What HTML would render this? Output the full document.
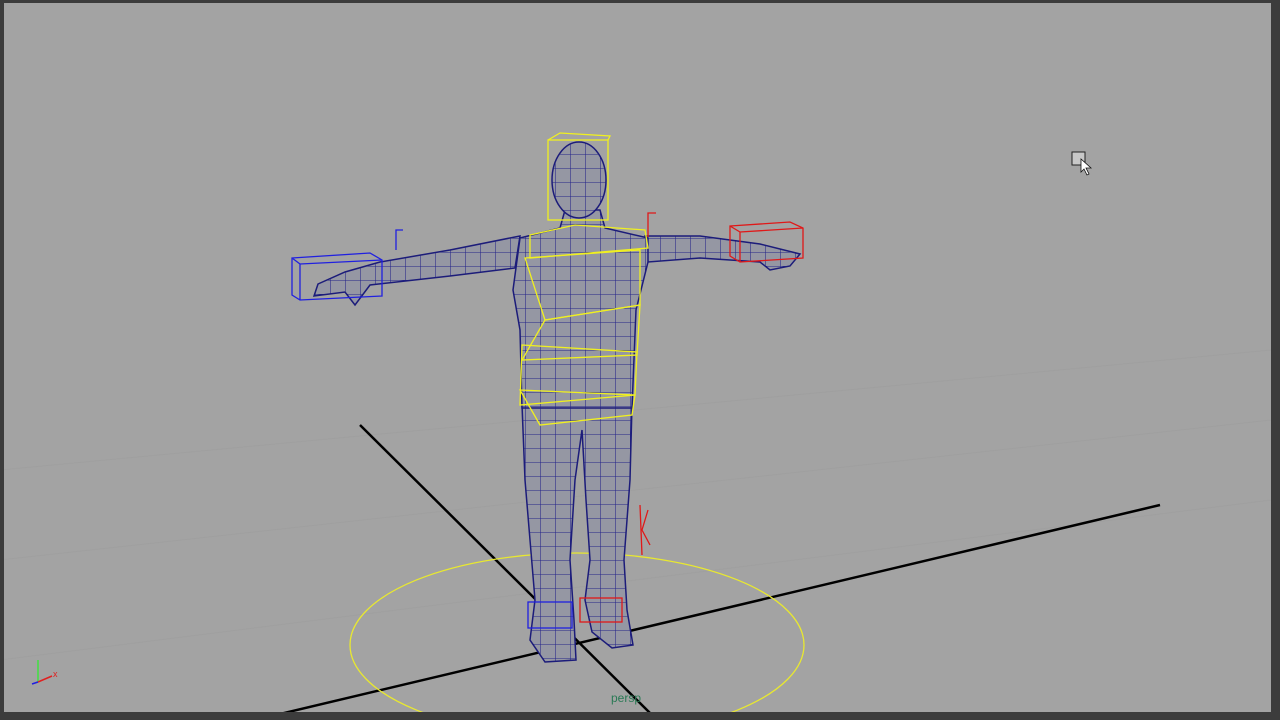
<!DOCTYPE html>
<html><head><meta charset="utf-8"><style>
html,body{margin:0;padding:0;background:#3a3a3a;width:1280px;height:720px;overflow:hidden}
svg{display:block}
</style></head><body>
<svg width="1280" height="720" viewBox="0 0 1280 720" xmlns="http://www.w3.org/2000/svg">
<defs>
<pattern id="mesh" width="15" height="14" patternUnits="userSpaceOnUse">
<rect width="15" height="14" fill="#9597a3"/>
<path d="M0 0H15M0 0V14" stroke="#25258a" stroke-width="1.1" fill="none"/>
</pattern>
<clipPath id="vp"><rect x="4" y="3" width="1267" height="709"/></clipPath>
</defs>
<rect width="1280" height="720" fill="#3c3c3c"/>
<rect x="4" y="3" width="1267" height="709" fill="#a3a3a3"/>
<g clip-path="url(#vp)">
<g stroke="#9c9c9c" stroke-width="1" opacity="0.5">
<line x1="0" y1="470" x2="1271" y2="350"/><line x1="0" y1="560" x2="1271" y2="420"/>
<line x1="0" y1="660" x2="1271" y2="500"/>
</g>
<line x1="360" y1="425" x2="652" y2="715" stroke="#000" stroke-width="2.5"/>
<line x1="280" y1="714" x2="1160" y2="505" stroke="#000" stroke-width="2.5"/>
<ellipse cx="577" cy="645" rx="227" ry="92" fill="none" stroke="#e8e830" stroke-width="1.3"/>
<g fill="url(#mesh)" stroke="#1c1c7a" stroke-width="1.5">
<path d="M520 236 L450 250 L380 262 L345 272 L318 284 L314 296 L345 292 L355 305 L370 285 L450 276 L515 268Z"/>
<path d="M645 236 L700 236 L760 244 L800 254 L790 266 L770 270 L760 262 L700 258 L648 262Z"/>
<path d="M522 405 L525 480 L530 540 L535 600 L530 640 L545 662 L576 660 L574 620 L570 560 L575 480 L582 430 L586 500 L590 560 L585 600 L592 632 L612 648 L633 645 L627 610 L624 560 L630 480 L632 405Z"/>
<path d="M565 210 L600 210 L605 228 L648 238 L648 262 L636 310 L632 408 L522 408 L520 330 L513 290 L520 238 L560 228Z"/>
<ellipse cx="579" cy="180" rx="27" ry="38"/>
</g>
<g fill="none" stroke="#f0f020" stroke-width="1.3">
<rect x="548" y="140" width="60" height="80"/><path d="M548 140 L560 133 L610 136 L608 140"/>
<path d="M530 235 L575 225 L645 230 L648 248 L530 258Z"/>
<path d="M525 258 L640 250 L640 305 L545 320Z"/>
<path d="M545 320 L640 305 L637 355 L522 360Z"/>
<path d="M522 345 L637 352 L635 395 L520 405Z"/>
<path d="M520 390 L635 395 L632 415 L540 425Z"/>
</g>
<g fill="none" stroke="#2020e0" stroke-width="1.3">
<path d="M292 258 L370 253 L382 260 L382 296 L300 300 L292 295Z M292 258 L300 264 L382 260 M300 264 L300 300"/>
<path d="M396 250 V230 H403"/>
<rect x="528" y="602" width="44" height="26"/>
</g>
<g fill="none" stroke="#e01818" stroke-width="1.3">
<path d="M730 226 L790 222 L803 228 L803 258 L740 262 L730 256Z M730 226 L740 232 L803 228 M740 232 L740 262"/>
<path d="M648 237 V213 H656"/>
<rect x="580" y="598" width="42" height="24"/>
<path d="M640 505 L642 555 M642 530 L648 510 M642 530 L650 545"/>
</g>
<text x="611" y="702" font-family="Liberation Sans, sans-serif" font-size="12" fill="#2a7a55">persp</text>
<g stroke-width="1.5"><line x1="38" y1="682" x2="38" y2="660" stroke="#40e040"/><line x1="38" y1="682" x2="52" y2="676" stroke="#e02020"/><line x1="38" y1="682" x2="32" y2="684" stroke="#2020e0"/></g>
<text x="53" y="677" font-family="Liberation Sans, sans-serif" font-size="9" fill="#e02020">x</text>
<rect x="1072" y="152" width="13" height="13" fill="#c8c8c8" stroke="#222" stroke-width="1"/>
<path d="M1081 159 L1081 172 L1084 169 L1087 175 L1089 174 L1086 168 L1091 168Z" fill="#fff" stroke="#111" stroke-width="0.8"/>
</g>
</svg>
</body></html>
